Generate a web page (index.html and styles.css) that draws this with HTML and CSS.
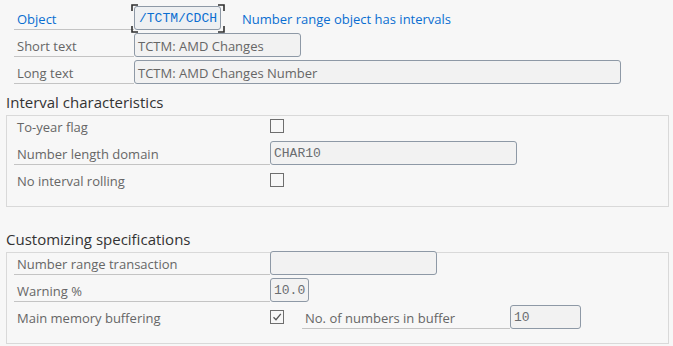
FILE: index.html
```html
<!DOCTYPE html>
<html lang="en">
<head>
    <meta charset="UTF-8">
    <title>Number Range Object</title>
    <link rel="stylesheet" href="styles.css">
</head>
<body>
    <div class="page">
        <div class="top-rows">
            <div class="row">
                <span class="label label-key">Object</span>
                <span class="field field-key">
                    /TCTM/CDCH
                    <svg class="focus" viewBox="0 0 94 29" width="94" height="29">
                        <path d="M1 7V1H7M87 1H93V7M1 22V28H7M87 28H93V22" fill="none" stroke="#2e2e2e" stroke-width="1.6"/>
                    </svg>
                </span>
                <span class="note">Number range object has intervals</span>
            </div>
            <div class="row">
                <span class="label">Short text</span>
                <span class="field field-text field-short">TCTM: AMD Changes</span>
            </div>
            <div class="row">
                <span class="label">Long text</span>
                <span class="field field-text field-long">TCTM: AMD Changes Number</span>
            </div>
        </div>

        <h2 class="group-title">Interval characteristics</h2>
        <div class="group">
            <div class="row">
                <span class="label label-wide label-plain">To-year flag</span>
                <span class="check"></span>
            </div>
            <div class="row">
                <span class="label label-wide">Number length domain</span>
                <span class="field field-mono field-domain">CHAR10</span>
            </div>
            <div class="row">
                <span class="label label-wide label-plain">No interval rolling</span>
                <span class="check"></span>
            </div>
        </div>

        <h2 class="group-title group-title-second">Customizing specifications</h2>
        <div class="group">
            <div class="row">
                <span class="label label-wide">Number range transaction</span>
                <span class="field field-mono field-trans"></span>
            </div>
            <div class="row">
                <span class="label label-wide">Warning %</span>
                <span class="field field-mono field-warn">10.0</span>
            </div>
            <div class="row">
                <span class="label label-wide label-plain">Main memory buffering</span>
                <span class="check check-on">
                    <svg viewBox="0 0 12 12" width="12" height="12">
                        <path d="M2.5 6.2L5 8.7L9.8 2.8" fill="none" stroke="#555" stroke-width="1.3"/>
                    </svg>
                </span>
                <span class="label label-buffer">No. of numbers in buffer</span>
                <span class="field field-mono field-buffer">10</span>
            </div>
        </div>
    </div>
</body>
</html>
```

FILE: styles.css
```css
body {
    margin: 0;
    background-color: #f7f7f7;
    font-family: "Open Sans", Arial, sans-serif;
    font-size: 13px;
    color: #666;
}

.page {
    padding: 6px 4px 0 6px;
}

.top-rows {
    display: flex;
    flex-direction: column;
    gap: 3px;
    padding-left: 8px;
}

.row {
    display: flex;
    align-items: center;
    height: 24px;
}

.label {
    box-sizing: border-box;
    flex: none;
    display: flex;
    align-items: center;
    width: 120px;
    height: 24px;
    padding: 2px 0 0 3px;
    border-bottom: 1px solid #c4c4c4;
    white-space: nowrap;
}

.label-key {
    color: #0a6ed1;
}

.label-wide {
    width: 256px;
}

.label-plain {
    border-bottom-color: transparent;
}

.label-buffer {
    width: 208px;
    margin-left: 18px;
}

.field {
    box-sizing: border-box;
    flex: none;
    display: flex;
    align-items: center;
    height: 24px;
    padding: 1px 3px 0;
    background-color: #f2f2f2;
    border: 1px solid #8e99a6;
    border-radius: 3px;
    white-space: nowrap;
}

.field-key {
    position: relative;
    width: 87px;
    padding-left: 4px;
    background-color: #eef0f2;
    color: #0a6ed1;
    font-family: "Liberation Mono", monospace;
    font-size: 13px;
}

.focus {
    position: absolute;
    left: -4px;
    top: -3px;
}

.note {
    margin: 2px 0 0 21px;
    color: #0a6ed1;
}

.field-text {
    color: #666;
}

.field-short {
    width: 167px;
}

.field-long {
    width: 487px;
}

.field-mono {
    font-family: "Liberation Mono", monospace;
    font-size: 13px;
    color: #6a6d70;
}

.field-domain {
    width: 247px;
}

.field-trans {
    width: 167px;
}

.field-warn {
    width: 39px;
}

.field-buffer {
    width: 71px;
}

.group-title {
    margin: 7px 0 2px;
    font-size: 15px;
    font-weight: normal;
    line-height: 22px;
    color: #333;
}

.group-title-second {
    margin-top: 21px;
}

.group {
    display: flex;
    flex-direction: column;
    gap: 3px;
    padding: 0 0 14px 7px;
    border: 1px solid #d9d9d9;
}

.group .row:first-child {
    margin-top: -2px;
}

.check {
    box-sizing: border-box;
    flex: none;
    display: flex;
    align-items: center;
    justify-content: center;
    width: 14px;
    height: 14px;
    border: 1px solid #6e6e6e;
    background-color: #f7f7f7;
}
```
